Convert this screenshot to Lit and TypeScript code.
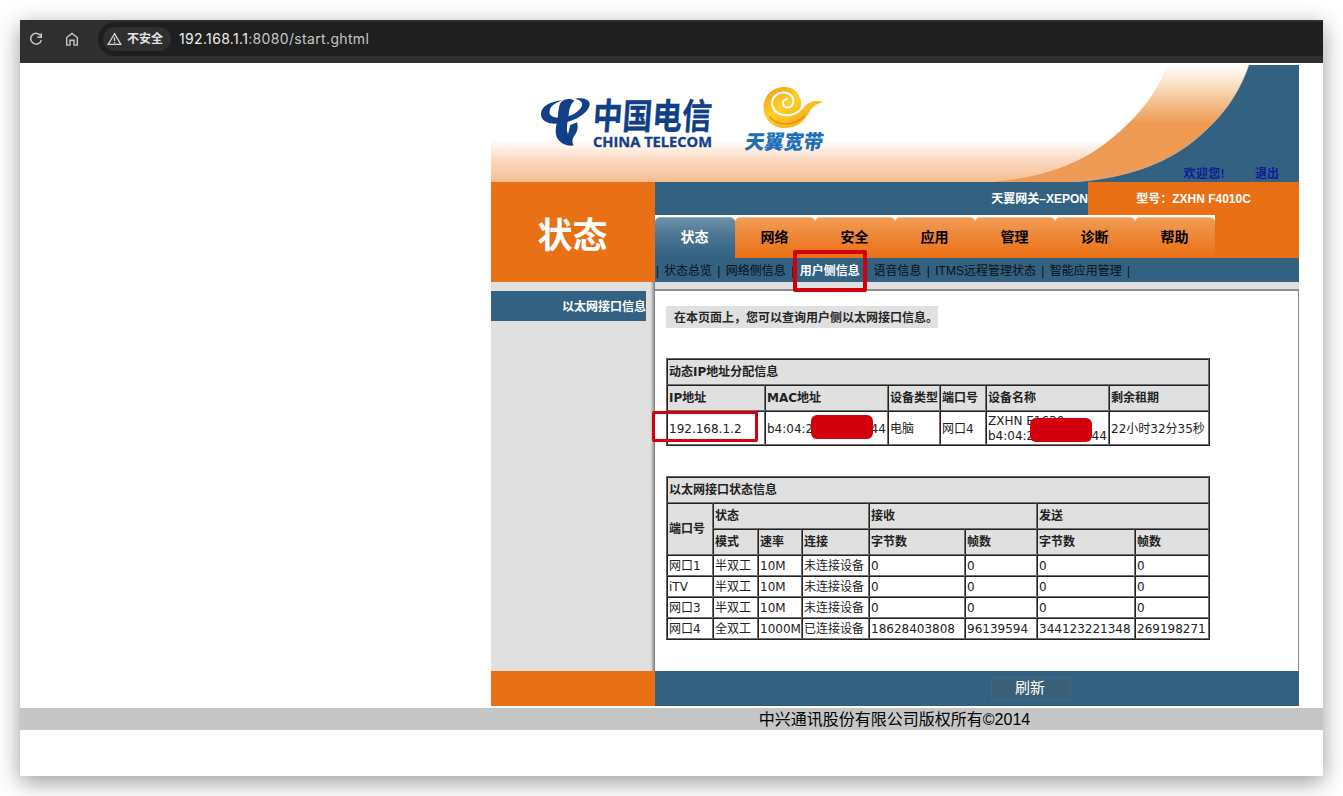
import { LitElement, html, css } from "lit";
import { customElement } from "lit/decorators.js";

const TABS = ["状态", "网络", "安全", "应用", "管理", "诊断", "帮助"];
const SUBNAV = ["状态总览", "网络侧信息", "用户侧信息", "语音信息", "ITMS远程管理状态", "智能应用管理"];
const PORTS = [
  ["网口1", "半双工", "10M", "未连接设备", "0", "0", "0", "0"],
  ["iTV", "半双工", "10M", "未连接设备", "0", "0", "0", "0"],
  ["网口3", "半双工", "10M", "未连接设备", "0", "0", "0", "0"],
  ["网口4", "全双工", "1000M", "已连接设备", "18628403808", "96139594", "344123221348", "269198271"],
];

@customElement("browser-bar")
export class BrowserBar extends LitElement {
  static styles = css`
    :host {
      display: flex;
      height: 43px;
      background: #2f2f2f;
      font-family: Inter, "Noto Sans CJK SC", sans-serif;
    }
    .tools { width: 78px; display: flex; padding: 11px 0 0 8px; gap: 20px; box-sizing: border-box; }
    .tools svg { width: 16px; height: 16px; }
    .url {
      flex: 1;
      height: 34px;
      margin-top: 2px;
      border-radius: 17px 0 0 17px;
      background: #1f1f1f;
      display: flex;
      align-items: center;
      padding-left: 5px;
    }
    .chip {
      width: 68px;
      height: 24px;
      border-radius: 12px;
      background: #2f2f2f;
      display: flex;
      align-items: center;
      gap: 5px;
      padding-left: 4px;
      box-sizing: border-box;
      color: #e3e3e3;
      font-size: 12px;
      font-weight: 600;
      line-height: 24px;
      white-space: nowrap;
      margin-top: -1px;
    }
    .chip svg { width: 15px; height: 14px; flex: none; }
    .addr { margin-left: 8px; font-size: 14px; color: #c8c8c8; letter-spacing: 0.34px; white-space: nowrap; margin-top: -2px; }
    .host { color: #ececec; }
  `;
  render() {
    return html`
      <div class="tools">
        <svg viewBox="0 0 16 16" fill="none" stroke="#c7c7c7" stroke-width="1.5">
          <path d="M12.9 5.2A5.4 5.4 0 1 0 13.4 8.9" />
          <path d="M13.3 2.2V6.3H9.2" />
        </svg>
        <svg viewBox="0 0 16 16" fill="none" stroke="#c7c7c7" stroke-width="1.4">
          <path d="M2.7 14.1V6.5L8 2.4L13.3 6.5V14.1H10V9.3H6V14.1Z" />
        </svg>
      </div>
      <div class="url">
        <div class="chip">
          <svg viewBox="0 0 15 14" fill="none" stroke="#d6d6d6" stroke-width="1.3">
            <path d="M7.5 1.7L13.8 12.3H1.2Z" />
            <path d="M7.5 5.3V9M7.5 10V11.3" />
          </svg>
          <span>不安全</span>
        </div>
        <div class="addr"><span class="host">192.168.1.1</span>:8080/start.ghtml</div>
      </div>
    `;
  }
}

@customElement("gateway-banner")
export class GatewayBanner extends LitElement {
  static styles = css`
    :host { display: block; position: relative; height: 117px; }
    .art { display: block; width: 808px; height: 117px; }
    .cn { font: 700 31px "Noto Sans CJK SC", sans-serif; fill: #0f3f86; stroke: #0f3f86; stroke-width: 0.3px; }
    .en { font: 700 13.5px "Open Sans", sans-serif; fill: #143f85; stroke: #143f85; stroke-width: 0.3px; }
    .ty { font: 900 20px "Noto Sans CJK SC", sans-serif; fill: #1c6fb9; }
    .links {
      position: absolute;
      right: 20px;
      bottom: -1px;
      display: flex;
      gap: 30px;
      font: 600 12px/17px "Liberation Sans", "Noto Sans CJK SC", sans-serif;
      color: #0b1c96;
    }
    .welcome { letter-spacing: 0.4px; }
  `;
  render() {
    return html`
      <svg class="art" viewBox="0 0 808 117">
        <defs>
          <linearGradient id="base" x1="0" y1="0" x2="0" y2="1">
            <stop offset="0" stop-color="#fff" />
            <stop offset=".64" stop-color="#fff" />
            <stop offset=".8" stop-color="#fbdcc6" />
            <stop offset="1" stop-color="#f5bd90" />
          </linearGradient>
          <linearGradient id="swoosh" x1="0" y1="0" x2="0" y2="1">
            <stop offset="0" stop-color="#fff" />
            <stop offset=".22" stop-color="#f8d5b0" />
            <stop offset=".5" stop-color="#ee9a52" />
            <stop offset="1" stop-color="#f09b55" />
          </linearGradient>
          <linearGradient id="gold" x1="0" y1="0" x2="1" y2="1">
            <stop offset="0" stop-color="#f59a12" />
            <stop offset=".4" stop-color="#fcd02a" />
            <stop offset=".7" stop-color="#f9b51c" />
            <stop offset="1" stop-color="#f39a1a" />
          </linearGradient>
        </defs>
        <rect width="808" height="117" fill="url(#base)" />
        <g transform="translate(469 -5) scale(.33333)">
          <path d="M622 15C590 100 530 180 430 255C330 328 220 354 100 366H335C500 356 630 308 722 225C790 165 835 105 867 15Z" fill="url(#swoosh)" />
          <path d="M867 15C835 105 790 165 722 225C630 308 500 356 335 366H1017V15Z" fill="#336182" />
          <path d="M867 15C835 105 790 165 722 225C630 308 500 356 335 366" fill="none" stroke="#d3b79b" stroke-opacity=".6" stroke-width="3" />
        </g>
        <g transform="translate(29 5) scale(.33333)" fill="#123f88">
          <path d="M128 91C88 94 61 112 63 134C65 156 90 164 121 160C170 154 207 126 209 103C210 90 192 82 166 86C184 91 190 99 185 109C175 131 140 146 114 143C94 141 86 134 89 122C92 108 104 99 128 91Z" />
          <path d="M163 92C156 86 134 84 123 97C114 108 116 130 112 152C106 176 104 192 114 208C125 224 148 230 161 226C156 217 156 209 161 200C171 188 176 176 171 157L151 165C148 177 146 184 144 192C138 180 142 160 145 142C148 121 148 106 163 92Z" />
        </g>
        <text class="cn" transform="translate(101 64) skewX(-4) scale(1 1.15)" textLength="119" lengthAdjust="spacingAndGlyphs">中国电信</text>
        <text class="en" x="102" y="81.5" textLength="119" lengthAdjust="spacingAndGlyphs">CHINA TELECOM</text>
        <g transform="translate(29 5) scale(.33333)">
          <path fill="url(#gold)" d="M793 51C756 51 730 79 731 114C732 150 760 175 797 174C835 173 856 148 868 125C880 106 894 101 910 96C890 89 866 93 852 111C846 119 838 126 829 130C842 118 848 101 840 83C832 62 816 51 793 51Z" />
          <path d="M838 122C815 141 779 139 764 121C748 100 758 74 783 68C808 64 825 82 819 101C813 116 792 116 789 101C788 93 793 87 801 87" fill="none" stroke="#fff" stroke-width="6" stroke-linecap="round" />
          <path d="M748 139C769 170 825 168 853 138" fill="none" stroke="#f08a12" stroke-width="4" />
        </g>
        <text class="ty" transform="translate(253 84) skewX(-10)" textLength="78" lengthAdjust="spacingAndGlyphs">天翼宽带</text>
      </svg>
      <div class="links"><span class="welcome">欢迎您!</span><span>退出</span></div>
    `;
  }
}

@customElement("app-root")
export class AppRoot extends LitElement {
  static styles = css`
    :host {
      display: block;
      width: 1343px;
      height: 796px;
      box-sizing: border-box;
      padding: 20px;
      background: #fff;
      overflow: hidden;
      font-family: "Liberation Sans", "Noto Sans CJK SC", sans-serif;
    }
    .window {
      position: relative;
      height: 756px;
      background: #fff;
      box-shadow: 0 6px 22px rgba(0, 0, 0, 0.4);
    }
    .page { margin: 2px 24px 0 471px; }
    .head { display: grid; grid-template-columns: 164px 1fr; height: 100px; }
    .title {
      background: #ea7015;
      color: #fff;
      font-size: 35px;
      font-weight: 700;
      display: flex;
      align-items: center;
      justify-content: center;
      line-height: 1;
      padding: 7px 1px 0 0;
      box-sizing: border-box;
    }
    .model { display: flex; height: 33px; font-size: 12px; font-weight: 700; color: #fff; line-height: 35px; white-space: nowrap; }
    .device { flex: 1; background: #336182; text-align: right; }
    .type { width: 211px; background: #ea7015; text-align: center; }
    .tabs { display: flex; height: 43px; background: #ea7015; }
    .tabbox { width: 80px; background: #fff; padding-top: 2px; box-sizing: border-box; }
    .tab {
      height: 41px;
      box-sizing: border-box;
      border-radius: 5px 5px 0 0;
      border-top: 1px solid #f5c193;
      background: linear-gradient(#f09c55, #ee8433 50%, #ea7015);
      padding-right: 1px;
      text-align: center;
      font-size: 14px;
      font-weight: 700;
      line-height: 39px;
      color: #000;
    }
    .tab.on { background: linear-gradient(#6d90aa, #4b7492 45%, #336182); border-top-color: #9db3c4; color: #fff; }
    .subnav { height: 24px; background: #336182; display: flex; font-size: 12px; line-height: 27px; white-space: nowrap; color: #0b0f13; }
    .bar { width: 13.8px; text-align: center; }
    .bar.first { width: 9px; text-align: left; padding-left: 1px; box-sizing: border-box; }
    .sel { color: #fff; font-weight: 700; }
    .body { display: grid; grid-template-columns: 164px 1fr; height: 389px; }
    .side { background: linear-gradient(90deg, #e0e0e0 159px, #c4c4c4 161px, #777 164px); padding-top: 9px; }
    .sideitem { width: 155px; height: 30px; background: #336182; color: #fff; font-size: 12px; font-weight: 700; line-height: 33px; text-align: right; }
    .main { border-top: 7px solid #e0e0e0; }
    .sheet { height: 382px; box-sizing: border-box; border-top: 2px solid #8c8c8c; border-right: 1px solid #8c8c8c; padding: 15px 0 0 11px; }
    .note { width: 264px; height: 22px; line-height: 24px; padding-left: 8px; background: #e0e0e0; font-size: 12px; font-weight: 700; color: #262626; white-space: nowrap; }
    table {
      width: 544px;
      table-layout: fixed;
      border-collapse: separate;
      border-spacing: 0;
      border: 1px solid #666;
      border-right-color: #222;
      border-bottom-color: #222;
      font: 12px/15px "DejaVu Sans", "Noto Sans CJK SC", sans-serif;
      color: #222;
      box-sizing: border-box;
    }
    th, td {
      box-sizing: border-box;
      padding: 0 0 0 1px;
      border: 1px solid #222;
      border-right-color: #707070;
      border-bottom-color: #707070;
      text-align: left;
      white-space: nowrap;
      height: 21px;
    }
    td { padding-top: 2px; }
    th { background: #e0e0e0; font-weight: 700; height: 26px; }
    .lease { margin-top: 30px; }
    .lease td { height: 34px; }
    .macstart { display: inline-block; width: 103.5px; }
    .ports { margin-top: 30px; }
    .foot { display: grid; grid-template-columns: 164px 1fr; height: 35px; }
    .foot-l { background: #ea7015; }
    .foot-r { background: #336182; padding: 6px 0 0 336px; }
    .btn { width: 80px; height: 23px; border: 1px solid #3d6784; box-sizing: border-box; background: #3a6078; color: #fff; font-size: 15px; line-height: 20px; padding-right: 2px; text-align: center; }
    .copy { margin-top: 2px; height: 22px; background: #c6c6c6; line-height: 24px; padding: 0 25px 0 471px; text-align: center; font-size: 16px; color: #000; }
    .mark { position: absolute; box-sizing: border-box; border: 4px solid #d2000d; border-radius: 2px; }
    .mark-nav { left: 773px; top: 230px; width: 74px; height: 42px; }
    .mark-ip { left: 632px; top: 391px; width: 106px; height: 31px; border-width: 3px; }
    .mask { position: absolute; width: 62px; height: 24px; border-radius: 6px; background: #d2000d; }
    .mask-mac { left: 791px; top: 395px; }
    .mask-name { left: 1010px; top: 398px; }
  `;

  render() {
    const leaseCols = [98, 123, 52, 46, 123, 100];
    const portCols = [46, 45, 44, 67, 96, 72, 98, 74];
    const mac = html`<span class="macstart">b4:04:2</span>44`;
    return html`
      <div class="window">
        <browser-bar></browser-bar>
        <div class="page">
          <gateway-banner></gateway-banner>
          <div class="head">
            <div class="title">状态</div>
            <div>
              <div class="model">
                <div class="device">天翼网关–XEPON</div>
                <div class="type">型号：ZXHN F4010C</div>
              </div>
              <div class="tabs">
                ${TABS.map((t, i) => html`<div class="tabbox"><div class="tab ${i === 0 ? "on" : ""}">${t}</div></div>`)}
              </div>
              <div class="subnav">
                <span class="bar first">|</span>
                ${SUBNAV.map((t, i) => html`<span class=${i === 2 ? "sel" : ""}>${t}</span><span class="bar">|</span>`)}
              </div>
            </div>
          </div>
          <div class="body">
            <div class="side"><div class="sideitem">以太网接口信息</div></div>
            <div class="main">
              <div class="sheet">
                <div class="note">在本页面上，您可以查询用户侧以太网接口信息。</div>
                <table class="lease">
                  <colgroup>${leaseCols.map((w) => html`<col width=${w} />`)}</colgroup>
                  <tr><th colspan="6">动态IP地址分配信息</th></tr>
                  <tr><th>IP地址</th><th>MAC地址</th><th>设备类型</th><th>端口号</th><th>设备名称</th><th>剩余租期</th></tr>
                  <tr>
                    <td>192.168.1.2</td><td>${mac}</td><td>电脑</td><td>网口4</td>
                    <td>ZXHN E1630<br />${mac}</td><td>22小时32分35秒</td>
                  </tr>
                </table>
                <table class="ports">
                  <colgroup>${portCols.map((w) => html`<col width=${w} />`)}</colgroup>
                  <tr><th colspan="8">以太网接口状态信息</th></tr>
                  <tr><th rowspan="2">端口号</th><th colspan="3">状态</th><th colspan="2">接收</th><th colspan="2">发送</th></tr>
                  <tr><th>模式</th><th>速率</th><th>连接</th><th>字节数</th><th>帧数</th><th>字节数</th><th>帧数</th></tr>
                  ${PORTS.map((r) => html`<tr>${r.map((c) => html`<td>${c}</td>`)}</tr>`)}
                </table>
              </div>
            </div>
          </div>
          <div class="foot">
            <div class="foot-l"></div>
            <div class="foot-r"><div class="btn">刷新</div></div>
          </div>
        </div>
        <div class="copy">中兴通讯股份有限公司版权所有©2014</div>
        <div class="mark mark-nav"></div>
        <div class="mark mark-ip"></div>
        <div class="mask mask-mac"></div>
        <div class="mask mask-name"></div>
      </div>
    `;
  }
}
